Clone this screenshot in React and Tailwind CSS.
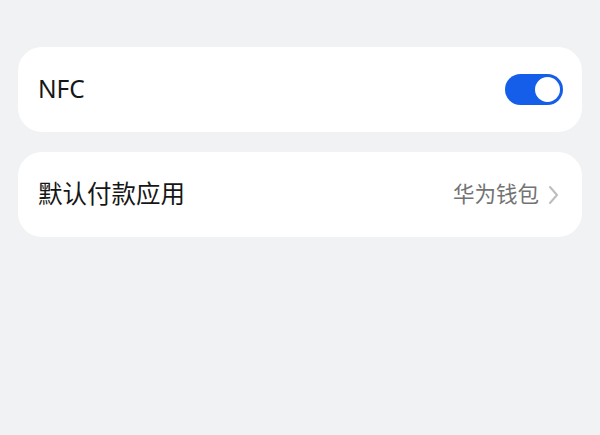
import React from 'react';

const font = { fontFamily: '"Noto Sans", "Noto Sans CJK SC", sans-serif' };

export default function App() {
  return (
    <div className="w-[600px] h-[435px] bg-[#f1f2f4] pt-[47px] px-[18px]" style={font}>
      <div className="space-y-[20px]">
        <div className="h-[85px] bg-white rounded-[24px] flex items-center justify-between pl-[20px] pr-[19px]">
          <span className="text-[24.5px] text-[#161616]">NFC</span>
          <div className="w-[58px] h-[31px] rounded-full bg-[#155ee9] flex items-center justify-end pr-[3px]">
            <div className="w-[25px] h-[25px] rounded-full bg-white" />
          </div>
        </div>
        <div className="h-[85px] bg-white rounded-[24px] flex items-center justify-between pl-[20px] pr-[23px]">
          <span className="text-[24.5px] text-[#161616]">默认付款应用</span>
          <div className="flex items-center gap-[9px]">
            <span className="text-[21.5px] text-[#737373]">华为钱包</span>
            <svg width="11" height="20" viewBox="0 0 11 20" fill="none">
              <path d="M2 2l7 8-7 8" stroke="#bdbdbd" strokeWidth="2" strokeLinecap="round" strokeLinejoin="round" />
            </svg>
          </div>
        </div>
      </div>
    </div>
  );
}
